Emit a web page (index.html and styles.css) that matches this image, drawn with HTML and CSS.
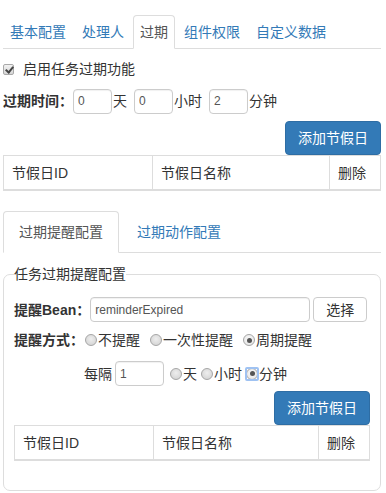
FILE: index.html
```html
<!DOCTYPE html>
<html lang="zh-CN">
<head>
<meta charset="utf-8">
<title>过期配置</title>
<link rel="stylesheet" href="styles.css">
</head>
<body>
<div class="page">
  <ul class="tabs tabs-top">
    <li><a>基本配置</a></li>
    <li><a>处理人</a></li>
    <li class="active"><a>过期</a></li>
    <li><a>组件权限</a></li>
    <li><a>自定义数据</a></li>
  </ul>

  <label class="check-row"><span class="checkbox"></span>启用任务过期功能</label>

  <div class="time-row">
    <b class="lbl">过期时间：</b>
    <input class="inp inp-time" value="0"><span class="unit">天</span>
    <input class="inp inp-time" value="0"><span class="unit">小时</span>
    <input class="inp inp-time" value="2"><span class="unit">分钟</span>
  </div>

  <div class="btn-row"><button class="btn btn-primary">添加节假日</button></div>
  <table class="grid grid-top">
    <thead><tr><th class="c1">节假日ID</th><th class="c2">节假日名称</th><th class="c3">删除</th></tr></thead>
  </table>

  <ul class="tabs tabs-main">
    <li class="active"><a>过期提醒配置</a></li>
    <li><a>过期动作配置</a></li>
  </ul>

  <fieldset class="box">
    <legend>任务过期提醒配置</legend>
    <div class="bean-row">
      <b class="lbl">提醒Bean：</b>
      <input class="inp inp-bean" value="reminderExpired">
      <button class="btn btn-default">选择</button>
    </div>
    <div class="mode-row">
      <b class="lbl">提醒方式：</b>
      <label class="opt"><span class="radio"></span>不提醒</label>
      <label class="opt"><span class="radio"></span>一次性提醒</label>
      <label class="opt"><span class="radio on"></span>周期提醒</label>
    </div>
    <div class="every-row">
      <span class="every">每隔</span>
      <input class="inp inp-every" value="1">
      <label class="opt"><span class="radio"></span>天</label>
      <label class="opt"><span class="radio"></span>小时</label>
      <label class="opt"><span class="radio on focus"></span>分钟</label>
    </div>
    <div class="btn-row btn-row-inner"><button class="btn btn-primary">添加节假日</button></div>
    <table class="grid grid-inner">
      <thead><tr><th class="d1">节假日ID</th><th class="d2">节假日名称</th><th class="d3">删除</th></tr></thead>
    </table>
  </fieldset>
</div>
</body>
</html>
```
FILE: styles.css
```css
* { box-sizing: border-box; }
html, body { margin: 0; padding: 0; background: #fff; }
body {
  font-family: "Liberation Sans", "Noto Sans CJK SC", sans-serif;
  font-size: 14px;
  line-height: 20px;
  color: #333;
}
.page { padding: 15px 5px 0 3px; }

.tabs {
  list-style: none;
  margin: 0;
  padding: 0;
  display: flex;
  border-bottom: 1px solid #ddd;
}
.tabs li { margin-bottom: -1px; margin-right: 2px; }
.tabs a {
  display: block;
  color: #337ab7;
  border: 1px solid transparent;
  border-radius: 4px 4px 0 0;
}
.tabs li.active a {
  color: #555;
  background: #fff;
  border-color: #ddd #ddd transparent;
}
.tabs-top a { padding: 6px 6px; }
.tabs-main { margin-top: 20px; }
.tabs-main a { padding: 10px 15px; }

.check-row {
  display: flex;
  align-items: center;
  margin-top: 10px;
  height: 20px;
}
.checkbox {
  width: 11px;
  height: 11px;
  margin: 0 9px 0 0;
  border: 1px solid #a9a9a9;
  border-radius: 2px;
  background: linear-gradient(#f2f2f2, #d6d6d6);
  position: relative;
}
.checkbox::after {
  content: "";
  position: absolute;
  left: 3px;
  top: 0px;
  width: 3px;
  height: 6px;
  border: solid #444;
  border-width: 0 2px 2px 0;
  transform: rotate(40deg);
}

.lbl { font-weight: bold; }

.time-row {
  display: flex;
  align-items: center;
  margin-top: 9px;
  height: 26px;
}
.inp {
  height: 25px;
  border: 1px solid #ccc;
  border-radius: 4px;
  font-family: "Liberation Sans", sans-serif;
  font-size: 12px;
  color: #555;
  padding: 0 4px;
  box-shadow: inset 0 1px 1px rgba(0,0,0,.06);
  outline: none;
}
.inp-time { width: 39px; margin: 0; }
.unit { margin-left: 1px; margin-right: 7px; }

.btn-row { display: flex; justify-content: flex-end; margin-top: 7px; }
.btn {
  font-family: "Liberation Sans", "Noto Sans CJK SC", sans-serif;
  font-size: 14px;
  line-height: 20px;
  border-radius: 4px;
  border: 1px solid transparent;
  cursor: pointer;
}
.btn-primary {
  width: 96px;
  height: 34px;
  color: #fff;
  background: #337ab7;
  border-color: #2e6da4;
  padding: 0;
}
.btn-default {
  width: 54px;
  height: 25px;
  padding: 0;
  background: #fff;
  color: #333;
  border-color: #ccc;
  margin-left: 3px;
}

.grid {
  width: 100%;
  border-collapse: collapse;
  table-layout: fixed;
}
.grid th {
  text-align: left;
  font-weight: normal;
  border: 1px solid #ddd;
  border-bottom: 2px solid #ddd;
  padding: 7px 8px 6px;
  line-height: 20px;
}
.c1 { width: 149px; }
.c3 { width: 51px; }
.d1 { width: 139px; }
.d3 { width: 51px; }

.box {
  margin: 11px 0 0 0;
  padding: 0 10px 29px;
  border: 1px solid #ddd;
  border-radius: 7px;
  min-width: 0;
}
.box legend {
  padding: 0;
  color: #333;
  line-height: 20px;
}
.bean-row {
  display: flex;
  align-items: center;
  margin-top: 13px;
  height: 25px;
}
.inp-bean { width: 220px; }

.mode-row {
  display: flex;
  align-items: center;
  margin-top: 8px;
  height: 20px;
}
.mode-row .lbl { margin-right: 1px; }
.opt { display: flex; align-items: center; margin-right: 10px; }
.every-row .opt { margin-right: 4px; }
.radio {
  width: 12px;
  height: 12px;
  border-radius: 50%;
  border: 1px solid #a6a6a6;
  background: radial-gradient(circle at 50% 40%, #eee, #cfcfcf);
  margin-right: 1px;
  position: relative;
}
.radio.on { background: radial-gradient(circle at 50% 40%, #fafafa, #e2e2e2); }
.radio.on::after {
  content: "";
  position: absolute;
  left: 2.5px;
  top: 2.5px;
  width: 5px;
  height: 5px;
  border-radius: 50%;
  background: #555;
}
.radio.focus::before {
  content: "";
  position: absolute;
  left: -2px;
  top: -2px;
  right: -2px;
  bottom: -2px;
  border: 2px solid #9fc2f2;
  border-radius: 2px;
}

.every-row {
  display: flex;
  align-items: center;
  padding-left: 70px;
  margin-top: 11px;
  height: 25px;
}
.inp-every { width: 49px; margin: 0 6px 0 3px; }
.btn-row-inner { margin-top: 5px; }
```
